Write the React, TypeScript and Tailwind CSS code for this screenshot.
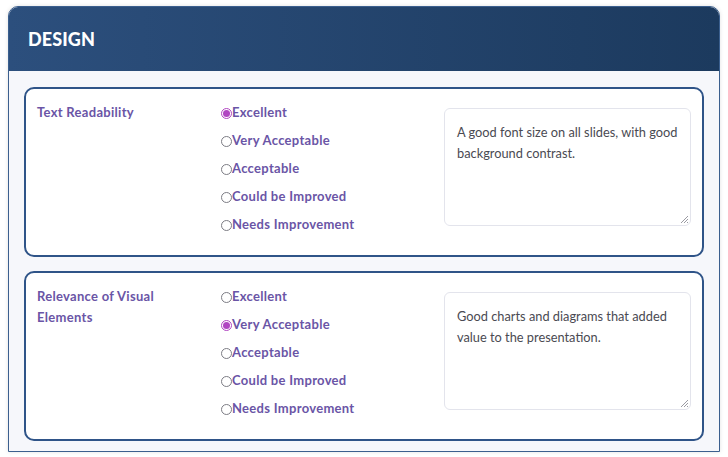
import React from "react";

const options = [
  "Excellent",
  "Very Acceptable",
  "Acceptable",
  "Could be Improved",
  "Needs Improvement",
];

type Criterion = { label: string; selected: number; comment: string };

const criteria: Criterion[] = [
  {
    label: "Text Readability",
    selected: 0,
    comment: "A good font size on all slides, with good background contrast.",
  },
  {
    label: "Relevance of Visual Elements",
    selected: 1,
    comment: "Good charts and diagrams that added value to the presentation.",
  },
];

function Radio({ checked }: { checked: boolean }) {
  return checked ? (
    <span className="flex h-[11px] w-[11px] shrink-0 items-center justify-center rounded-full border border-[#b146c2] bg-white">
      <span className="h-[7px] w-[7px] rounded-full bg-[#b146c2]" />
    </span>
  ) : (
    <span className="h-[11px] w-[11px] shrink-0 rounded-full border border-[#7c7c84] bg-white" />
  );
}

function CriterionCard({ c }: { c: Criterion }) {
  return (
    <div className="flex h-[170px] rounded-[10px] border-2 border-[#2f5488] bg-white pl-[11px] pr-[11px] pt-[10px]">
      <div className="w-[184px] shrink-0 pr-[30px] pt-[3px] text-[13px] font-bold leading-[21px] tracking-[0.3px] text-[#6a55a6]">
        {c.label}
      </div>
      <div className="flex w-[223px] shrink-0 flex-col">
        {options.map((o, i) => (
          <label
            key={o}
            className="flex h-[28px] items-center text-[13px] font-bold tracking-[0.3px] text-[#6a55a6]"
          >
            <Radio checked={i === c.selected} />
            <span>{o}</span>
          </label>
        ))}
      </div>
      <div className="relative mt-[9px] h-[118px] w-[248px] rounded-[6px] border border-[#e3e4ec] bg-white pl-[12px] pr-[6px] pt-[13px] text-[12.8px] leading-[21px] text-[#4a4a52]">
        {c.comment}
        <svg
          className="absolute bottom-[2px] right-[2px]"
          width="8"
          height="8"
          viewBox="0 0 8 8"
        >
          <path d="M8 1 L1 8 M8 4 L4 8 M8 7 L7 8" stroke="#9a9aa2" strokeWidth="1" />
        </svg>
      </div>
    </div>
  );
}

export default function App() {
  return (
    <div
      className="h-[457px] overflow-hidden bg-white pl-[8px] pr-[8px] pt-[6px]"
      style={{ fontFamily: "Lato, 'Noto Sans', sans-serif" }}
    >
      <div className="overflow-hidden rounded-t-[10px] border border-[#3b5f8e] bg-[#f6f7fb] shadow-[0_0_4px_rgba(0,0,0,0.12)]">
        <div className="flex h-[64px] items-center bg-gradient-to-r from-[#2c4f7d] to-[#1c3a5e] px-[19px]">
          <h2 className="text-[18px] font-black tracking-[0.1px] text-white">
            DESIGN
          </h2>
        </div>
        <div className="flex flex-col gap-[14px] px-[15px] pb-[10px] pt-[16px]">
          {criteria.map((c) => (
            <CriterionCard key={c.label} c={c} />
          ))}
        </div>
      </div>
    </div>
  );
}
